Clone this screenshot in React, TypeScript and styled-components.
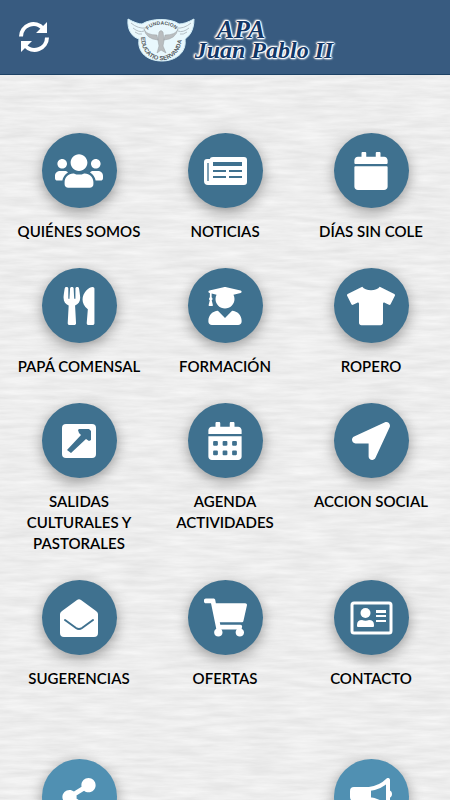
import React from "react";
import styled, { createGlobalStyle } from "styled-components";
import {
  FaUsers,
  FaCalendar,
  FaUtensils,
  FaUserGraduate,
  FaTshirt,
  FaCalendarAlt,
  FaLocationArrow,
  FaShoppingCart,
  FaShareAlt,
} from "react-icons/fa";

const paper = `url("data:image/svg+xml,${encodeURIComponent(
  `<svg xmlns="http://www.w3.org/2000/svg" width="450" height="400"><filter id="p" x="0" y="0" width="100%" height="100%" color-interpolation-filters="sRGB"><feTurbulence type="fractalNoise" baseFrequency="0.025 0.2" numOctaves="4" seed="8" stitchTiles="stitch"/><feColorMatrix values="0.09 0 0 0 0.885  0.09 0 0 0 0.885  0.09 0 0 0 0.885  0 0 0 0 1"/></filter><rect width="450" height="400" filter="url(#p)"/></svg>`
)}")`;

const GlobalStyle = createGlobalStyle`
  * { box-sizing: border-box; }
  body { margin: 0; background: #ededed; font-family: Lato, sans-serif; }
`;

const Screen = styled.div`
  height: 100vh;
  display: flex;
  flex-direction: column;
  background: #ededed ${paper};
`;

const Header = styled.header`
  flex: none;
  height: 75px;
  display: grid;
  grid-template-columns: 68px 1fr 68px;
  align-items: center;
  background: #385b80;
  border-bottom: 1px solid #1d4265;
`;

const RefreshButton = styled.button`
  justify-self: center;
  display: flex;
  padding: 0;
  border: 0;
  background: none;
  color: #fff;
  cursor: pointer;
`;

const Brand = styled.h1`
  margin: 0;
  display: flex;
  justify-content: center;
  align-items: center;
  padding: 6px 0 0 10px;
`;

const BrandText = styled.span`
  display: grid;
  font: italic 700 24px/20px "Liberation Serif", serif;
  color: #123766;
  white-space: nowrap;
  text-shadow: 1px 0 1px #fff, -1px 0 1px #fff, 0 1px 1px #fff, 0 -1px 1px #fff,
    1px 1px 2px #fff, -1px -1px 2px #fff, 0 0 3px #fff;
`;

const BrandTop = styled.span`
  padding-left: 22px;
  font-size: 26px;
`;

const Content = styled.main`
  flex: 1;
  min-height: 0;
  overflow-y: auto;
  scrollbar-width: none;
  padding: 58px 6px 32px;
  display: flex;
  flex-direction: column;
  gap: 44px;
`;

const Menu = styled.nav`
  display: grid;
  grid-template-columns: repeat(3, 1fr);
`;

const Tile = styled.a`
  display: flex;
  flex-direction: column;
  align-items: center;
  gap: 13px;
  padding: 0 8px 26px;
  color: #000;
  font-size: 15px;
  font-weight: 600;
  line-height: 21px;
  text-align: center;
  text-decoration: none;
`;

const Disc = styled.span<{ $light?: boolean }>`
  width: 75px;
  height: 75px;
  flex: none;
  border-radius: 50%;
  display: flex;
  align-items: center;
  justify-content: center;
  color: #fff;
  background: ${(p) => (p.$light ? "#5090b2" : "#3f718f")};
  box-shadow: 0 4px 14px rgba(0, 0, 0, 0.36);
`;

const Shortcut = styled(Tile)<{ $column: number }>`
  grid-column: ${(p) => p.$column};
`;

function RefreshIcon() {
  return (
    <svg width="30" height="30" viewBox="0 0 30 30">
      <g fill="none" stroke="currentColor" strokeWidth="4">
        <path d="M2 14.500A12.500 12.500 0 0 1 24 6.500" />
        <path d="M28 15.500A12.500 12.500 0 0 1 6 23.500" />
      </g>
      <path d="M28 0v11H17zM2 30V19h11z" fill="currentColor" />
    </svg>
  );
}

function Emblem() {
  return (
    <svg width="68" height="44" viewBox="0 0 68 44" aria-hidden="true">
      <path
        d="M1 1 Q10 6 15 6 C24 0 44 0 52 6 Q58 6 67 1 C67 14 61 19 58 21 C60 35 48 43 35 43 C21 43 10 35 12 21 C5 19 0 12 1 1Z"
        fill="#e9f8fd"
        stroke="#d3eef8"
      />
      <g fill="none" stroke="#b4bfc5" strokeWidth="1">
        <path d="M4 5Q11 11 19 10M6 10Q12 15 17 13M8 14Q12 17 15 16M64 5Q57 11 49 10M62 10Q56 15 51 13M60 14Q56 17 53 16" />
      </g>
      <path
        d="M17 11 Q19 21 31 22 L32 14 Q34 11 36 14 L37 22 Q49 21 51 11 Q49 17 38 17 L36 28 L39 35 L34 32 L30 35 L32 28 L30 17 Q19 17 17 11Z"
        fill="#b9bdbf"
        stroke="#999fa2"
        strokeWidth="0.5"
      />
      <path id="arc-top" d="M21 12 C26 5 43 5 49 12" fill="none" />
      <path id="arc-low" d="M14 19 C14 50 54 50 55 19" fill="none" />
      <g fill="#555b60" fontFamily="Liberation Sans, sans-serif" fontSize="5">
        <text>
          <textPath href="#arc-top">FUNDACION</textPath>
        </text>
        <text fontSize="6">
          <textPath href="#arc-low">EDUCATIO SERVANDA</textPath>
        </text>
      </g>
    </svg>
  );
}

function NewsIcon() {
  return (
    <svg width="43" height="30" viewBox="0 0 43 30">
      <path d="M9 1h31q3 0 3 3v22q0 3-3 3H4q-4 0-4-4V6q0-3 3-3h3q0-2 3-2z" fill="currentColor" />
      <path d="M4 7v18" stroke="#7fa0b4" strokeWidth="2" />
      <path d="M9 6h29v4H9zM9 14h13v2H9zM25 14h13v2H25zM9 20h13v2H9zM25 20h13v2H25z" fill="#3f718f" />
    </svg>
  );
}

function TripIcon() {
  return (
    <svg width="34" height="34" viewBox="0 0 34 34">
      <rect width="34" height="34" rx="4" fill="currentColor" />
      <path d="M17 5h10l2 2v9l-2 1-3-2L9 29l-4-3L19 11l-2-2-1-3z" fill="#3f718f" />
    </svg>
  );
}

function MailIcon() {
  return (
    <svg width="38" height="38" viewBox="0 0 38 38">
      <path
        d="M17 1q2-1.500 4 0l15 11q2 1.500 2 3v19q0 4-4 4H4q-4 0-4-4V15q0-1.500 2-3z"
        fill="currentColor"
      />
      <path
        d="M5 21l11 8q3 2 6 0l11-8"
        fill="none"
        stroke="#3f718f"
        strokeWidth="2"
        strokeLinecap="round"
      />
    </svg>
  );
}

function ContactIcon() {
  return (
    <svg width="43" height="34" viewBox="0 0 43 34">
      <rect x="2" y="2" width="39" height="30" rx="2" fill="none" stroke="currentColor" strokeWidth="3" />
      <g fill="currentColor">
        <circle cx="15.500" cy="12" r="5" />
        <path d="M7 24q0-5 5-5 3.500 1.500 7 0 5 0 5 5v1q0 1-1 1H8q-1 0-1-1z" />
        <path d="M26 9h10v3H26zM26 14h10v2H26zM26 19h10v2H26z" />
      </g>
    </svg>
  );
}

function MegaphoneIcon() {
  return (
    <svg width="43" height="38" viewBox="0 0 43 38">
      <path
        d="M38 2v28Q29 22 19 21V11Q30 10 38 2z"
        fill="none"
        stroke="currentColor"
        strokeWidth="4"
        strokeLinejoin="round"
      />
      <path
        d="M4 9h15v14h-4q0 7 4 11-4 4-9 2-3-6-2-13H4q-4 0-4-4v-6q0-4 4-4zM39 12q3 1 3 4t-3 4z"
        fill="currentColor"
      />
    </svg>
  );
}

const items = [
  { label: "QUIÉNES SOMOS", icon: <FaUsers size={48} /> },
  { label: "NOTICIAS", icon: <NewsIcon /> },
  { label: "DÍAS SIN COLE", icon: <FaCalendar size={38} /> },
  { label: "PAPÁ COMENSAL", icon: <FaUtensils size={38} /> },
  { label: "FORMACIÓN", icon: <FaUserGraduate size={38} /> },
  { label: "ROPERO", icon: <FaTshirt size={48} /> },
  { label: "SALIDAS CULTURALES Y PASTORALES", icon: <TripIcon /> },
  { label: "AGENDA ACTIVIDADES", icon: <FaCalendarAlt size={38} /> },
  { label: "ACCION SOCIAL", icon: <FaLocationArrow size={38} /> },
  { label: "SUGERENCIAS", icon: <MailIcon /> },
  { label: "OFERTAS", icon: <FaShoppingCart size={43} /> },
  { label: "CONTACTO", icon: <ContactIcon /> },
];

export default function App() {
  return (
    <Screen>
      <GlobalStyle />
      <Header>
        <RefreshButton type="button" aria-label="Actualizar">
          <RefreshIcon />
        </RefreshButton>
        <Brand>
          <Emblem />
          <BrandText>
            <BrandTop>APA</BrandTop>
            <span>Juan Pablo II</span>
          </BrandText>
        </Brand>
      </Header>
      <Content>
        <Menu aria-label="Secciones">
          {items.map((item) => (
            <Tile key={item.label} href="#">
              <Disc>{item.icon}</Disc>
              {item.label}
            </Tile>
          ))}
        </Menu>
        <Menu aria-label="Accesos">
          <Shortcut href="#" $column={1} aria-label="Compartir">
            <Disc $light>
              <FaShareAlt size={38} />
            </Disc>
          </Shortcut>
          <Shortcut href="#" $column={3} aria-label="Avisos">
            <Disc $light>
              <MegaphoneIcon />
            </Disc>
          </Shortcut>
        </Menu>
      </Content>
    </Screen>
  );
}
